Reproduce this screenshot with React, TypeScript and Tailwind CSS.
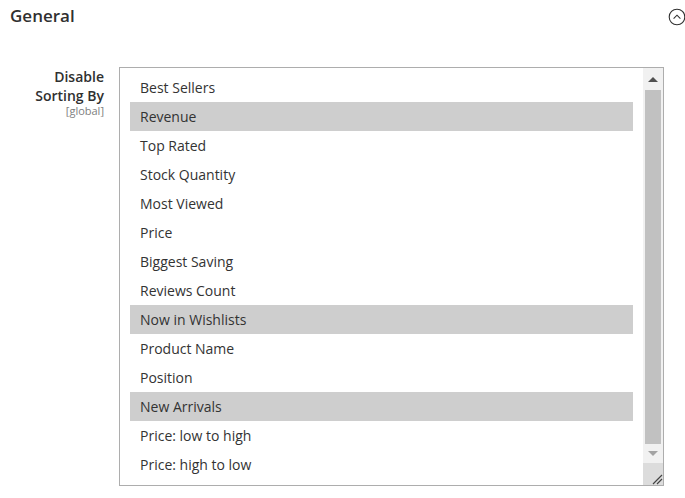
import React from 'react';

const OPTIONS: { label: string; selected?: boolean }[] = [
  { label: 'Best Sellers' },
  { label: 'Revenue', selected: true },
  { label: 'Top Rated' },
  { label: 'Stock Quantity' },
  { label: 'Most Viewed' },
  { label: 'Price' },
  { label: 'Biggest Saving' },
  { label: 'Reviews Count' },
  { label: 'Now in Wishlists', selected: true },
  { label: 'Product Name' },
  { label: 'Position' },
  { label: 'New Arrivals', selected: true },
  { label: 'Price: low to high' },
  { label: 'Price: high to low' },
];

function CollapseIcon() {
  return (
    <svg width="18" height="18" viewBox="0 0 18 18" fill="none">
      <circle cx="9" cy="9" r="7.8" stroke="#303030" strokeWidth="1.1" />
      <path d="M5.6 10.6 L9 7.2 L12.4 10.6" stroke="#303030" strokeWidth="1.1" />
    </svg>
  );
}

function Scrollbar() {
  return (
    <div className="flex w-[20px] flex-col bg-[#f1f1f1]">
      <div className="flex h-[22px] items-center justify-center">
        <div className="h-0 w-0 border-x-[5px] border-b-[5px] border-x-transparent border-b-[#505050]" />
      </div>
      <div className="flex flex-1 justify-center">
        <div className="w-[16px] bg-[#c1c1c1]" />
      </div>
      <div className="flex h-[19px] items-center justify-center">
        <div className="h-0 w-0 border-x-[5px] border-t-[5px] border-x-transparent border-t-[#a3a3a3]" />
      </div>
      <div className="relative h-[22px] bg-[#dcdcdc]">
        <svg className="absolute bottom-0 right-0" width="12" height="12" viewBox="0 0 12 12">
          <path d="M2 11 L11 2 M6 11 L11 6" stroke="#444" strokeWidth="1.2" />
        </svg>
      </div>
    </div>
  );
}

export default function App() {
  return (
    <div className="h-[498px] w-[685px] overflow-hidden bg-white text-[#333] [font-family:'Open_Sans',sans-serif]">
      <div className="flex items-center justify-between pl-[10px] pt-[4px]">
        <h2 className="text-[17px] font-semibold leading-[24px] text-[#303030]">General</h2>
        <div className="mr-[-1px] mt-[2px]">
          <CollapseIcon />
        </div>
      </div>

      <div className="mt-[39px] flex">
        <div className="w-[104px] text-right">
          <div className="text-[14px] font-semibold leading-[19px] text-[#303030]">
            Disable
            <br />
            Sorting By
          </div>
          <div className="text-[11px] leading-[11px] text-[#808080]">[global]</div>
        </div>

        <div className="ml-[15px] flex h-[419px] w-[545px] border border-[#adadad]">
          <ul className="flex-1 pl-[10px] pr-[10px] pt-[5px]">
            {OPTIONS.map(o => (
              <li
                key={o.label}
                className={
                  'h-[29px] pl-[10px] text-[14px] leading-[29px] ' +
                  (o.selected ? 'bg-[#cecece]' : '')
                }
              >
                {o.label}
              </li>
            ))}
          </ul>
          <Scrollbar />
        </div>
      </div>
    </div>
  );
}
